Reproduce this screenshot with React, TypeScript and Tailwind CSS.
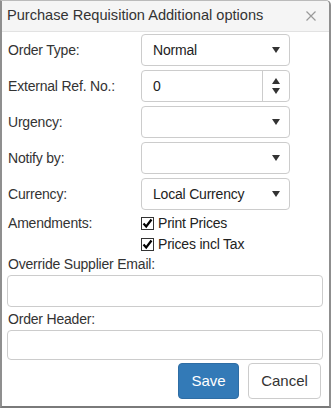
const FONT = { fontFamily: '"Liberation Sans", Arial, sans-serif' };

function Caret({ up = false }: { up?: boolean }) {
  return (
    <svg width="8" height="6" viewBox="0 0 8 6" className="block">
      {up ? <path d="M0 6 L4 0 L8 6 Z" fill="#333" /> : <path d="M0 0 L8 0 L4 6 Z" fill="#333" />}
    </svg>
  );
}

function SelectBox({ value }: { value: string }) {
  return (
    <div className="flex h-[32px] w-[149px] items-center justify-between rounded-[4px] border border-[#ccc] bg-white pl-[11px] pr-[9px] text-[14px] tracking-[-0.2px] text-[#222]">
      <span>{value}</span>
      <Caret />
    </div>
  );
}

function NumberBox({ value }: { value: string }) {
  return (
    <div className="flex h-[32px] w-[149px] rounded-[4px] border border-[#ccc] bg-white text-[14px] text-[#222]">
      <span className="flex flex-1 items-center pl-[11px]">{value}</span>
      <div className="flex w-[27px] flex-col items-center justify-center gap-[4px] border-l border-[#ccc]">
        <Caret up />
        <Caret />
      </div>
    </div>
  );
}

function Check({ label }: { label: string }) {
  return (
    <div className="flex h-[21px] items-center gap-[4px]">
      <span className="flex h-[13px] w-[13px] items-center justify-center border border-[#333] bg-white">
        <svg width="11" height="11" viewBox="0 0 11 11">
          <path d="M1.5 5.5 L4.2 8.5 L9.5 1.5" fill="none" stroke="#000" strokeWidth="2.2" />
        </svg>
      </span>
      <span className="text-[14px] tracking-[-0.2px] text-[#222]">{label}</span>
    </div>
  );
}

function Row({ label, children }: { label: string; children: React.ReactNode }) {
  return (
    <div className="flex h-[32px] items-center">
      <span className="w-[134px] pl-[1px] text-[14px] tracking-[-0.2px] text-[#333]">{label}</span>
      {children}
    </div>
  );
}

export default function App() {
  return (
    <div style={FONT} className="flex h-[408px] w-[331px] flex-col overflow-hidden rounded-tr-[5px] border-x-2 border-b-2 border-t border-x-[#8f8f8f] border-b-[#7a7a7a] border-t-[#bbb] bg-white">
      <div className="flex h-[31px] shrink-0 items-center justify-between border-b border-[#e2e2e2] bg-[#f5f5f5] pl-[5px] pr-[13px]">
        <h1 className="text-[14.6px] text-[#333]">Purchase Requisition Additional options</h1>
        <svg width="10" height="10" viewBox="0 0 10 10">
          <path d="M0.5 0.5 L9.5 9.5 M9.5 0.5 L0.5 9.5" stroke="#9a9a9a" strokeWidth="1.2" />
        </svg>
      </div>

      <div className="flex flex-col pl-[5px] pr-[7px] pt-[2px]">
        <div className="flex flex-col gap-[4px]">
          <Row label="Order Type:">
            <SelectBox value="Normal" />
          </Row>
          <Row label="External Ref. No.:">
            <NumberBox value="0" />
          </Row>
          <Row label="Urgency:">
            <SelectBox value="" />
          </Row>
          <Row label="Notify by:">
            <SelectBox value="" />
          </Row>
          <Row label="Currency:">
            <SelectBox value="Local Currency" />
          </Row>
        </div>

        <div className="mt-[3px] flex">
          <span className="w-[134px] pl-[1px] pt-[1px] text-[14px] leading-[18px] tracking-[-0.2px] text-[#333]">Amendments:</span>
          <div className="flex flex-col">
            <Check label="Print Prices" />
            <Check label="Prices incl Tax" />
          </div>
        </div>

        <label className="pl-[1px] text-[14px] leading-[18px] tracking-[-0.2px] text-[#333]">Override Supplier Email:</label>
        <div className="mt-[2px] h-[32px] w-[316px] rounded-[4px] border border-[#ccc] bg-white" />

        <label className="mt-[3px] pl-[1px] text-[14px] leading-[18px] tracking-[-0.2px] text-[#333]">Order Header:</label>
        <div className="mt-[2px] h-[30px] w-[316px] rounded-[4px] border border-[#ccc] bg-white" />

        <div className="mt-[3px] flex justify-end gap-[9px] pr-[1px]">
          <button className="h-[36px] w-[61px] rounded-[4px] border border-[#2e6da4] bg-[#337ab7] text-[15px] text-white">
            Save
          </button>
          <button className="h-[36px] w-[73px] rounded-[4px] border border-[#ccc] bg-white text-[15px] text-[#333]">
            Cancel
          </button>
        </div>
      </div>
    </div>
  );
}
